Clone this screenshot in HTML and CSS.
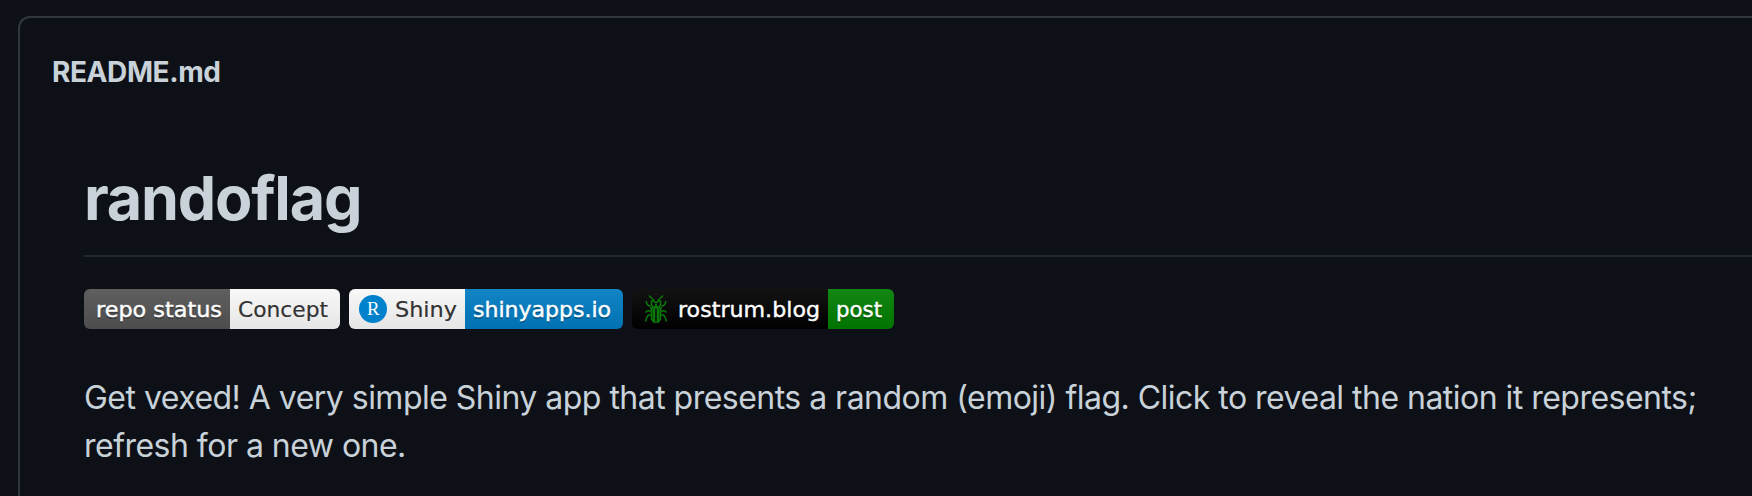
FILE: index.html
```html
<!DOCTYPE html>
<html lang="en">
<head>
<meta charset="utf-8">
<title>randoflag</title>
<link rel="stylesheet" href="styles.css">
</head>
<body>
<main class="readme">
  <div class="filename"><span>README.md</span></div>
  <article class="content">
    <h1 class="title"><span>randoflag</span></h1>
    <div class="badges">
      <svg class="badge" width="256" height="40" role="img" aria-label="repo status: Concept">
        <defs>
          <linearGradient id="shade" x2="0" y2="1"><stop offset="0" stop-color="#bbb" stop-opacity=".1"/><stop offset="1" stop-opacity=".1"/></linearGradient>
        </defs>
        <rect width="146" height="40" fill="#555"/><rect x="146" width="110" height="40" fill="#fff"/>
        <rect width="256" height="40" fill="url(#shade)"/>
        <text class="shadow" x="12" y="30" textLength="126" lengthAdjust="spacingAndGlyphs">repo status</text>
        <text class="light" x="12" y="28" textLength="126" lengthAdjust="spacingAndGlyphs">repo status</text>
        <text class="dark" x="154" y="28" textLength="90" lengthAdjust="spacingAndGlyphs">Concept</text>
      </svg>
      <svg class="badge" width="274" height="40" role="img" aria-label="Shiny: shinyapps.io">
        <rect width="116" height="40" fill="#fff"/><rect x="116" width="158" height="40" fill="#007ec6"/>
        <rect width="274" height="40" fill="url(#shade)"/>
        <circle cx="24" cy="20" r="14" fill="#0081cb"/>
        <text class="initial" x="18" y="26.300" textLength="12.500" lengthAdjust="spacingAndGlyphs">R</text>
        <text class="dark" x="46" y="28" textLength="62" lengthAdjust="spacingAndGlyphs">Shiny</text>
        <text class="shadow" x="124" y="30" textLength="138" lengthAdjust="spacingAndGlyphs">shinyapps.io</text>
        <text class="light" x="124" y="28" textLength="138" lengthAdjust="spacingAndGlyphs">shinyapps.io</text>
      </svg>
      <svg class="badge" width="262" height="40" role="img" aria-label="rostrum.blog: post">
        <rect width="196" height="40"/><rect x="196" width="66" height="40" fill="#008000"/>
        <rect width="262" height="40" fill="url(#shade)"/>
        <g fill="none" stroke="#087808" stroke-width="1.5">
          <path d="M17 6.5l5 5M31 6.5l-5 5M19.5 12h2.5l1 1.5h2l1-1.5h2.5v4l-2 2h-5l-2-2zM18 19h12M19.5 19v11l2 3h5l2-3V19"/>
          <path d="M19 17h-2l-2-2-1-3M29 17h2l2-2 1-3M19 22h-4l-1.500 1.500M29 22h4l1.500 1.500M19 26h-2.500l-2 3-1 3.500M29 26h2.500l2 3 1 3.500"/>
        </g>
        <path d="M20.500 20h2.800v12h-2.800zM24.700 20h2.800v12h-2.800zM23 15h2v3h-2z" fill="#087808"/>
        <text class="shadow" x="46" y="30" textLength="142" lengthAdjust="spacingAndGlyphs">rostrum.blog</text>
        <text class="light" x="46" y="28" textLength="142" lengthAdjust="spacingAndGlyphs">rostrum.blog</text>
        <text class="shadow" x="204" y="30" textLength="46" lengthAdjust="spacingAndGlyphs">post</text>
        <text class="light" x="204" y="28" textLength="46" lengthAdjust="spacingAndGlyphs">post</text>
      </svg>
    </div>
    <p class="intro"><span>Get vexed! A very simple Shiny app that presents a random (emoji) flag. Click to reveal the nation it represents;</span><br><span>refresh for a new one.</span></p>
  </article>
</main>
</body>
</html>
```
FILE: styles.css
```css
* { box-sizing: border-box; }
body {
  margin: 0;
  height: 496px;
  padding: 16px 0 0 18px;
  background: #0d1117;
  color: #c9d1d9;
  font-family: Inter, "Liberation Sans", sans-serif;
}
.readme {
  height: 480px;
  padding: 32px 0 0 32px;
  border: solid #30363d;
  border-width: 2px 0 0 2px;
  border-top-left-radius: 12px;
}
.filename {
  font-size: 28px;
  font-weight: 650;
  line-height: 44px;
  letter-spacing: -.4px;
}
.content { padding: 64px 0 0 32px; }
.title {
  margin: 0 0 32px;
  height: 99px;
  border-bottom: 2px solid #21262d;
  font-size: 61px;
  font-weight: 650;
  line-height: 80px;
  letter-spacing: -1.2px;
}
.badges {
  display: flex;
  gap: 9px;
  margin-bottom: 45px;
}
.badge {
  display: block;
  border-radius: 6px;
  font-family: "DejaVu Sans", sans-serif;
  font-size: 22px;
}
.light { fill: #fff; stroke: #fff; stroke-width: .4px; }
.dark { fill: #333; stroke: #333; stroke-width: .2px; }
.shadow { fill: #010101; fill-opacity: .3; }
.initial {
  fill: #fff;
  font-family: "Liberation Serif", serif;
  font-size: 19px;
}
.intro {
  margin: 0;
  font-size: 32px;
  line-height: 48px;
  letter-spacing: -.52px;
  white-space: nowrap;
}
```
